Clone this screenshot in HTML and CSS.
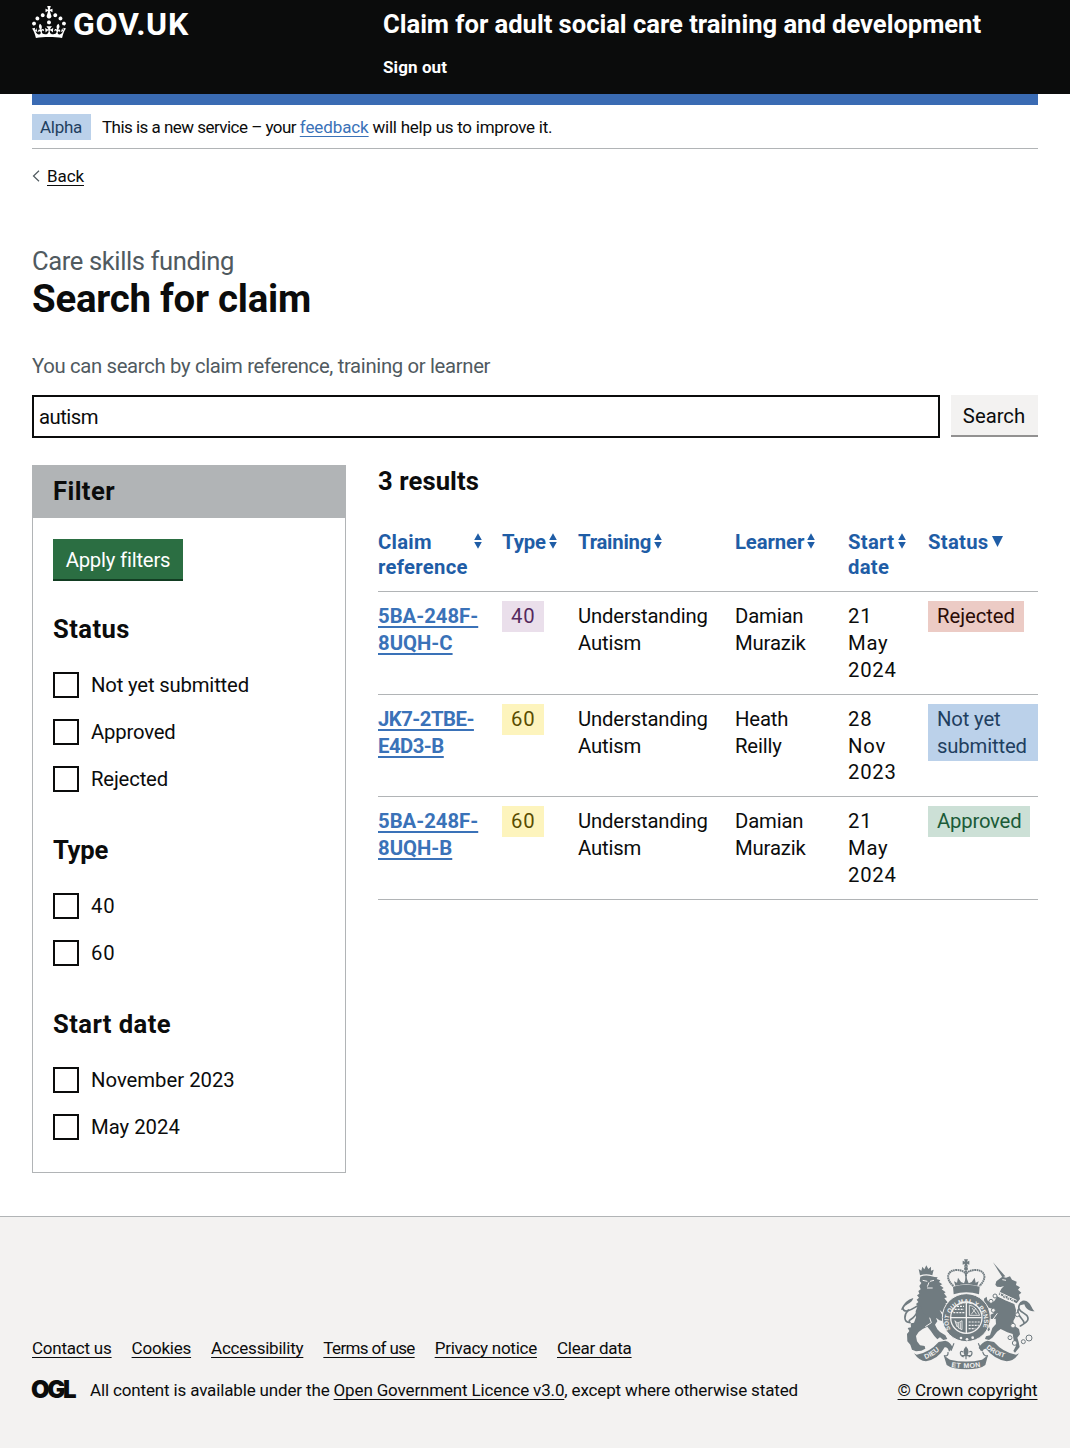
FILE: index.html
```html
<!DOCTYPE html>
<html lang="en">
<head>
<meta charset="utf-8">
<title>Search for claim – GOV.UK</title>
<link rel="stylesheet" href="styles.css">
</head>
<body>
<svg width="0" height="0" class="defs" aria-hidden="true">
  <symbol id="sort" viewBox="0 0 8 16"><path d="M4 .2 7.800 7H.2zM4 15.800 7.800 9H.2z" fill="currentColor"/></symbol>
</svg>

<header class="header">
  <div class="wrap header-row">
    <a class="logo" href="#">
      <svg class="crown" viewBox="0 0 32 30" fill="currentColor" aria-hidden="true"><path d="M22.6 10.4c-1 .4-2-.1-2.4-1-.4-.9.1-2 1-2.4.9-.4 2 .1 2.4 1s-.1 2-1 2.4m-5.900 6.700c-.9.4-2-.1-2.400-1-.4-.9.1-2 1-2.400.9-.4 2 .1 2.400 1s-.1 2-1 2.400m10.800-3.700c-1 .4-2-.1-2.400-1-.4-.9.1-2 1-2.400.9-.4 2 .1 2.400 1s0 2-1 2.400m3.300 4.800c-1 .4-2-.1-2.400-1-.4-.9.1-2 1-2.400.9-.4 2 .1 2.400 1s-.1 2-1 2.400M17 4.700l2.300 1.200V2.500l-2.300.7-.2-.2.9-3h-3.400l.9 3-.2.2c-.1.1-2.300-.7-2.300-.7v3.400L15 4.700c.1.1.1.2.2.2l-1.300 4c-.1.2-.1.4-.1.6 0 1.100.8 2 1.900 2.200h.7c1-.2 1.900-1.100 1.900-2.100 0-.2 0-.4-.1-.6l-1.300-4c-.1-.2 0-.2.1-.3m-7.600 5.700c.9.4 2-.1 2.400-1 .4-.9-.1-2-1-2.400-.9-.4-2 .1-2.400 1s0 2 1 2.400m-5 3c.9.4 2-.1 2.400-1 .4-.9-.1-2-1-2.400-.9-.4-2 .1-2.400 1s.1 2 1 2.400m-3.200 4.800c.9.4 2-.1 2.400-1 .4-.9-.1-2-1-2.400-.9-.4-2 .1-2.400 1s0 2 1 2.400m14.800 11c4.400 0 8.600.3 12.300.8 1.100-4.500 2.400-7 3.700-8.800l-2.500-.9c.2 1.300.3 1.900 0 2.700-.4-.4-.8-1.100-1.100-2.300l-1.200 4c.7-.5 1.300-.8 2-.9-1.100 2.500-2.600 3.100-3.500 3-1.100-.2-1.700-1.200-1.500-2.100.3-1.200 1.500-1.500 2.100-.1 1.100-2.300-.8-3-2-2.300 1.900-1.900 2.100-3.500.6-5.600-2.100 1.600-2.100 3.200-1.200 5.500-1.200-1.400-3.200-.6-2.500 1.600.9-1.400 2.100-.5 1.900.8-.2 1.100-1.700 2.100-3.500 1.900-2.700-.2-2.900-2.100-2.900-3.600.7-.1 1.900.5 2.900 1.900l.4-4.300c-1.100 1.100-2.100 1.400-3.200 1.400.4-1.200 2.100-3 2.100-3h-5.400s1.700 1.900 2.100 3c-1.100 0-2.100-.2-3.200-1.400l.4 4.300c1-1.400 2.200-2 2.900-1.900-.1 1.500-.2 3.400-2.900 3.600-1.900.2-3.400-.8-3.500-1.900-.2-1.300 1-2.200 1.900-.8.7-2.300-1.200-3-2.500-1.600.9-2.200.9-3.900-1.200-5.500-1.500 2-1.300 3.700.6 5.600-1.200-.7-3.100 0-2 2.300.6-1.400 1.800-1.100 2.100.1.2.9-.3 1.900-1.500 2.100-.9.2-2.400-.5-3.500-3 .6 0 1.200.3 2 .9l-1.200-4c-.3 1.100-.7 1.900-1.100 2.300-.3-.8-.2-1.400 0-2.700l-2.900.9C1.300 23 2.600 25.500 3.700 30c3.700-.5 7.900-.8 12.300-.8"/></svg>
      <span class="wordmark">GOV.UK</span>
    </a>
    <div class="header-content">
      <a class="service" href="#">Claim for adult social care training and development</a>
      <a class="signout" href="#">Sign out</a>
    </div>
  </div>
</header>

<div class="wrap">
  <div class="bluebar"></div>
  <div class="phase">
    <strong class="phase-tag">Alpha</strong>
    <span class="phase-text">This is a new service – your <a class="link" href="#">feedback</a><span class="phase-end"> will help us to improve it.</span></span>
  </div>
  <div class="back">
    <svg viewBox="0 0 8 12" aria-hidden="true"><path d="M7 .8 1.500 6 7 11.200" fill="none" stroke="#505a5f" stroke-width="1.200"/></svg>
    <a href="#">Back</a>
  </div>

  <main class="main">
    <h1 class="title"><span class="caption">Care skills funding</span>Search for claim</h1>
    <label class="hint" for="q">You can search by claim reference, training or learner</label>
    <div class="search">
      <input id="q" class="input" type="text" value="autism">
      <button class="button grey">Search</button>
    </div>

    <div class="columns">
      <aside class="filter">
        <h2 class="filter-head">Filter</h2>
        <div class="filter-body">
          <button class="button green">Apply filters</button>
          <h3 class="group">Status</h3>
          <label class="check"><input type="checkbox"><span>Not yet submitted</span></label>
          <label class="check"><input type="checkbox"><span>Approved</span></label>
          <label class="check"><input type="checkbox"><span>Rejected</span></label>
          <h3 class="group tight">Type</h3>
          <label class="check num"><input type="checkbox"><span>40</span></label>
          <label class="check num"><input type="checkbox"><span>60</span></label>
          <h3 class="group">Start date</h3>
          <label class="check date"><input type="checkbox"><span>November 2023</span></label>
          <label class="check date"><input type="checkbox"><span>May 2024</span></label>
        </div>
      </aside>

      <section class="results">
        <h2 class="count">3 results</h2>
        <table class="table">
          <colgroup><col class="c1"><col class="c2"><col class="c3"><col class="c4"><col class="c5"><col class="c6"></colgroup>
          <thead>
            <tr>
              <th><span class="sort spread wide">Claim reference<svg><use href="#sort"/></svg></span></th>
              <th><span class="sort">Type<svg><use href="#sort"/></svg></span></th>
              <th><span class="sort narrow">Training<svg><use href="#sort"/></svg></span></th>
              <th><span class="sort">Learner<svg><use href="#sort"/></svg></span></th>
              <th><span class="sort wide">Start date<svg><use href="#sort"/></svg></span></th>
              <th><span class="sort wide">Status<svg class="down" viewBox="0 0 11 11"><path d="M0 0h11L5.500 11z" fill="currentColor"/></svg></span></th>
            </tr>
          </thead>
          <tbody>
            <tr>
              <td><a class="link ref" href="#">5BA-248F-<br>8UQH-C</a></td>
              <td><span class="tag purple num">40</span></td>
              <td>Understanding Autism</td>
              <td>Damian Murazik</td>
              <td class="day">21<br>May<br>2024</td>
              <td><span class="tag red">Rejected</span></td>
            </tr>
            <tr>
              <td><a class="link ref jk" href="#">JK7-2TBE-<br>E4D3-B</a></td>
              <td><span class="tag yellow num">60</span></td>
              <td>Understanding Autism</td>
              <td>Heath<br>Reilly</td>
              <td class="day">28<br>Nov<br>2023</td>
              <td><span class="tag blue">Not yet submitted</span></td>
            </tr>
            <tr>
              <td><a class="link ref" href="#">5BA-248F-<br>8UQH-B</a></td>
              <td><span class="tag yellow num">60</span></td>
              <td>Understanding Autism</td>
              <td>Damian Murazik</td>
              <td class="day">21<br>May<br>2024</td>
              <td><span class="tag approved">Approved</span></td>
            </tr>
          </tbody>
        </table>
      </section>
    </div>
  </main>
</div>

<footer class="footer">
  <div class="wrap footer-row">
    <div class="footer-left">
      <nav class="footer-links">
        <a class="f1" href="#">Contact us</a><a class="f1" href="#">Cookies</a><a class="f1" href="#">Accessibility</a><a class="f4" href="#">Terms of use</a><a class="f5" href="#">Privacy notice</a><a class="f5" href="#">Clear data</a>
      </nav>
      <div class="licence">
        <span class="ogl">OGL</span>
        <span class="licence-text">All content is available under the <a href="#">Open Government Licence v3.0</a>, except where otherwise stated</span>
      </div>
    </div>
    <div class="footer-right">
      <svg class="arms" viewBox="30 24 405 336" aria-hidden="true">
        <defs>
          <path id="garter" d="M182 238A53 53 0 1 1 276 238"/>
          <path id="rib1" d="M102 329Q136 318 166 284"/>
          <path id="rib2" d="M180 350Q228 359 278 349"/>
          <path id="rib3" d="M284 290Q314 320 364 328"/>
        </defs>
        <g fill="#707b80">
          <!-- imperial crown -->
          <path d="M189 110Q229 98 269 110L267 133Q229 121 191 133z"/>
          <path d="M222 28h12l-3 7 7-3v12l-7-3 3 9h-12l3-9-7 3V32l7 3z"/>
          <circle cx="228" cy="56" r="6"/>
          <path d="M196 107 192 94 201 98 204 83 213 96 222 100 229 82 236 100 245 96 254 83 257 98 266 94 262 107Q229 98 196 107z"/>
          <g fill="none" stroke="#707b80" stroke-width="6" stroke-dasharray="5 1.500">
            <path d="M190 108C163 84 174 60 200 60 214 60 224 65 228 73 232 65 244 60 257 60 284 60 294 84 268 108"/>
            <path d="M228 62V92"/>
          </g>
          <!-- lion -->
          <path d="M90 76 86 57 94 62 97 50 103 58 109 46 115 57 123 50 123 62 131 59 127 76Q109 69 90 76z"/>
          <path d="M91 80Q109 72 134 81L143 82 140 87 151 91 147 96 157 103 150 106 161 114 155 118 167 127 162 130 171 142 163 145 174 158 166 160 178 172 168 173 163 181 158 188 149 180 157 196 170 206 176 218 168 222 160 214 148 211 138 203 142 214 135 224 142 238 150 246 166 256 172 267 160 270 150 262 142 268 133 258 122 242 112 230 98 237 86 246 78 258 81 274 90 286 104 288 106 296 94 302 78 304 66 299 61 284 52 274 51 252 58 243 53 234 63 232 62 220 72 218 78 202 77 184 83 168 78 162 85 156 80 149 87 143 81 136 88 131 85 123 92 118 88 108 94 99 89 93z"/>
          <path d="M83 185 91 164 101 190 114 205 104 216 83 219z"/>
          <path d="M33 179C40 161 53 148 70 144 66 160 50 161 43 171 38 178 39 181 33 179z"/>
          <!-- unicorn -->
          <path d="M309 37 346 79 337 82z"/>
          <path d="M337 80 348 83 360 79 366 89 380 95 378 105 390 112 384 119 394 128 387 134 390 147 380 160 364 152 346 146 326 133 334 116 342 108 332 111 321 110 316 104 319 94z"/>
          <path d="M323 138 344 150 373 162 378 180 376 202 370 213 373 227 387 237 390 253 382 263 386 276 389 291 375 308 370 303 378 287 371 270 368 252 352 247 332 237 321 245 307 263 297 270 285 267 288 259 300 256 307 234 318 222 317 206 301 207 295 222 300 239 295 244 286 230 284 215 288 200 311 190 306 176 291 172 283 160 282 146 290 140 292 151 303 160 313 153z"/>
          <path d="M390 166C389 150 405 147 416 158 425 166 426 178 434 184 421 184 407 179 403 163z"/>
        </g>
        <g fill="none" stroke="#707b80" stroke-width="5" stroke-linecap="round">
          <path d="M39 176C43 189 59 182 75 172 95 159 87 183 74 198 62 212 53 209 60 218"/>
          <path d="M55 180C40 196 42 216 57 217"/>
          <path d="M393 158C374 180 400 186 411 197 421 211 405 220 391 228"/>
          <path d="M385 178C377 195 401 207 402 218"/>
        </g>
        <!-- face and harness details -->
        <g fill="none" stroke="#f3f2f1" stroke-width="3">
          <path d="M98 91 112 94M120 94 132 91M117 97 112 110M111 114h17M106 230 124 218 119 203"/>
          <path d="M329 127 380 151M324 139 375 160M330 128 334 143 344 134 347 149 357 140 359 154 369 145 370 158"/>
          <path d="M337 89 348 91M306 212 322 190"/>
        </g>
        <g fill="#f3f2f1" stroke="#707b80" stroke-width="3">
          <circle cx="315" cy="138" r="6"/><circle cx="303" cy="154" r="6"/><circle cx="310" cy="181" r="6"/>
          <circle cx="382" cy="194" r="6"/><circle cx="369" cy="227" r="7"/>
          <circle cx="360" cy="263" r="6"/><circle cx="374" cy="279" r="7"/><circle cx="400" cy="275" r="6"/><circle cx="417" cy="264" r="9"/>
        </g>
        <!-- garter and shield -->
        <circle cx="229" cy="203" r="72" fill="#707b80" stroke="#f3f2f1" stroke-width="3"/>
        <circle cx="229" cy="203" r="47" fill="#707b80" stroke="#f3f2f1" stroke-width="4"/>
        <g stroke="#f3f2f1" stroke-width="4" fill="none"><path d="M229 157v92M183 203h92"/></g>
        <g stroke="#f3f2f1" stroke-width="3.500" fill="none" stroke-dasharray="6 3">
          <path d="M194 178h28M190 188h33M201 169h21M236 216h33M236 226h30M236 236h20"/>
        </g>
        <g stroke="#f3f2f1" stroke-width="2.500" fill="none">
          <path d="M238 166Q257 167 269 196H238zM246 174 260 193M258 174 244 193"/>
          <path d="M195 212Q200 224 216 212V239Q199 234 195 212M201 218v13M206 219v16M211 217v20"/>
        </g>
        <g fill="#f3f2f1"><circle cx="213" cy="264" r="4"/><circle cx="231" cy="268" r="4"/><circle cx="248" cy="263" r="4"/></g>
        <g class="motto"><text font-size="19"><textPath href="#garter" textLength="210" lengthAdjust="spacingAndGlyphs">SOIT QUI MAL Y PENSE</textPath></text></g>
        <!-- ribbon -->
        <g fill="#707b80">
          <path d="M80 314Q118 308 146 276L166 272Q184 277 187 294L177 305Q174 291 164 292 146 327 108 334 88 334 72 310z"/>
          <path d="M378 314Q340 308 312 276L292 272Q274 277 266 294L277 305Q280 295 288 296 312 327 350 334 372 334 387 310z"/>
          <path d="M161 316Q171 324 180 329 229 340 276 329L294 316 286 345Q270 358 229 358 188 358 170 345z"/>
          <path d="M228 289Q241 304 232 317H224Q215 304 228 289z"/>
        </g>
        <g fill="none" stroke="#707b80" stroke-width="3.500"><path d="M221 321C207 316 209 299 219 306M236 321C250 316 248 299 238 306M216 317h25M228 317v11M174 306C176 320 165 318 162 317M278 306C282 320 291 318 294 317M192 280 183 302M265 280 274 302"/></g>
        <g class="motto">
          <text font-size="21"><textPath href="#rib1" startOffset="5">DIEU</textPath></text>
          <text font-size="21"><textPath href="#rib2" startOffset="4" textLength="88">ET MON</textPath></text>
          <text font-size="20"><textPath href="#rib3" startOffset="6">DROIT</textPath></text>
        </g>
      </svg>
      <a class="copyright" href="#">© Crown copyright</a>
    </div>
  </div>
</footer>
</body>
</html>
```
FILE: styles.css
```css
* { box-sizing: border-box; }
body {
  margin: 0;
  background: #fff;
  color: #0b0c0c;
  font: 20.3px/26.7px Roboto, "Liberation Sans", sans-serif;
  letter-spacing: -0.15px;
}
h1, h2, h3 { margin: 0; }
a { color: inherit; text-underline-offset: 3px; text-decoration-thickness: 1px; text-decoration-skip-ink: none; }
.defs { display: block; height: 0; }
.wrap { margin: 0 32.5px 0 32px; }

/* header */
.header { height: 94px; background: #0b0c0c; color: #fff; }
.header a { text-decoration: none; font-weight: 700; }
.header-row { display: flex; }
.logo { display: flex; width: 351px; padding-top: 6px; }
.crown { width: 34px; height: 32px; margin-right: 7px; }
.wordmark { margin-top: -1px; font-size: 32px; line-height: 38px; letter-spacing: 0.7px; }
.header-content { display: flex; flex-direction: column; }
.service { padding-top: 8px; font-size: 25.6px; line-height: 32px; letter-spacing: -0.03px; white-space: nowrap; }
.signout { margin-top: 16px; font-size: 17px; line-height: 22px; letter-spacing: 0.09px; }

/* phase banner and back link */
.bluebar { height: 11px; background: #3a6bb3; }
.phase { display: flex; align-items: center; height: 44px; border-bottom: 1px solid #b1b4b6; font-size: 17px; line-height: 26px; }
.phase-tag { width: 59px; margin-right: 11px; padding: 0 8px; background: #bbd1ea; color: #1f3f60; font-weight: 400; letter-spacing: -0.28px; }
.phase-text { letter-spacing: -0.53px; }
.phase-text .link { letter-spacing: -0.1px; }
.phase-end { letter-spacing: -0.26px; }
.link { color: #3a72b8; }
.back { display: flex; align-items: center; gap: 7px; margin-top: 16px; font-size: 17px; line-height: 22px; letter-spacing: -0.1px; }
.back svg { width: 8px; height: 12px; }

/* search */
.main { padding-top: 58px; }
.title { font-size: 38.4px; line-height: 43px; letter-spacing: -0.24px; }
.caption { display: block; color: #505a5f; font-size: 25.6px; font-weight: 400; line-height: 32px; letter-spacing: -0.4px; }
.hint { display: block; margin-top: 33px; color: #505a5f; letter-spacing: -0.33px; }
.search { display: flex; gap: 11px; margin-top: 15px; height: 43px; }
.input { flex: 1; height: 43px; padding: 2px 5px 0; border: 2px solid #0b0c0c; border-radius: 0; font: inherit; letter-spacing: -0.5px; color: inherit; }
.button { height: 42px; padding: 1px 0 0; border: 0; border-radius: 0; font: inherit; letter-spacing: -0.19px; white-space: nowrap; }
.grey { width: 87px; background: #f3f2f1; box-shadow: inset 0 -2px #929191; color: #0b0c0c; letter-spacing: 0; }
.green { display: block; width: 130px; background: #2b6e42; box-shadow: inset 0 -2px #123d22; color: #fff; }

/* filter panel */
.columns { display: flex; gap: 32px; margin-top: 27px; }
.filter { width: 314px; height: 708px; border: 1px solid #b1b4b6; }
.filter-head { height: 52px; padding-left: 20px; background: #b1b4b6; font-size: 25.6px; line-height: 50px; letter-spacing: 0.42px; }
.filter-body { padding: 21px 20px 0; }
.group { margin-top: 32px; margin-bottom: 27px; font-size: 25.6px; line-height: 32px; letter-spacing: 0.43px; }
.check + .group { margin-top: 42px; }
.check + .group.tight { letter-spacing: -0.25px; }
.check { display: flex; align-items: center; height: 26px; margin-bottom: 21px; letter-spacing: -0.17px; }
.check span { padding-top: 2px; }
.check.date { letter-spacing: 0; }
.check input { appearance: none; width: 26px; height: 26px; margin: 0 12px 0 0; border: 2px solid #0b0c0c; background: #fff; }
.num { letter-spacing: 0.8px !important; }
.check + .group + .check.date, .check.date + .check.date { position: static; }

/* results table */
.results { flex: 1; }
.count { font-size: 25.6px; line-height: 32px; letter-spacing: 0.1px; }
.table { width: 659.5px; margin-top: 21px; border-collapse: collapse; table-layout: fixed; }
.c1 { width: 124px; } .c2 { width: 76px; } .c3 { width: 157px; } .c4 { width: 113px; } .c5 { width: 80px; }
th, td { padding: 0; border-bottom: 1px solid #b1b4b6; text-align: left; vertical-align: top; }
th { height: 74px; padding-top: 12px; color: #1f5da6; line-height: 25px; }
td { height: 102.6px; padding: 11px 20px 0 0; }
td:last-child { padding-right: 0; }
.sort { display: flex; align-items: flex-start; gap: 3px; letter-spacing: -0.1px; }
.sort.spread { width: 104px; justify-content: space-between; }
.sort.narrow { letter-spacing: -0.24px; }
.sort.wide { letter-spacing: 0.28px; }
.sort svg { flex: none; width: 8px; height: 16px; margin-top: 3px; }
.sort .down { width: 11px; height: 11px; margin: 6px 0 0 0; }
th:nth-child(5) .sort { width: 58px; }
.ref { font-weight: 700; letter-spacing: 0; text-decoration-thickness: 1.5px; }
.jk { letter-spacing: -0.5px; }
.jk::first-line { letter-spacing: -0.8px; }
.day { letter-spacing: 0.75px; }
.tag { display: inline-block; margin-top: -2px; padding: 2px 9px; line-height: 26.7px; letter-spacing: -0.05px; }
.tag.num { width: 42px; padding-right: 0; }
.purple { background: #eadfeb; color: #55295d; }
.yellow { background: #fdf4bd; color: #594d00; }
.red { background: #eccbc5; color: #2a0b06; }
.blue { background: #bbd1ea; color: #1f3f60; padding-right: 8px; letter-spacing: -0.15px; }
.approved { background: #cce0d6; color: #1b5b38; letter-spacing: -0.2px; }

/* footer */
.footer { height: 232px; margin-top: 43px; border-top: 1px solid #b1b4b6; background: #f3f2f1; font-size: 17px; line-height: 22px; }
.footer-row { display: flex; justify-content: space-between; padding-top: 41px; }
.footer-left { padding-top: 79px; }
.footer-links { display: flex; gap: 20px; }
.f1 { letter-spacing: -0.22px; }
.f4 { letter-spacing: -0.64px; }
.f5 { letter-spacing: -0.25px; }
.licence { display: flex; align-items: center; margin-top: 20px; }
.ogl { width: 58px; font: 900 24px/20px Inter, "Liberation Sans", sans-serif; letter-spacing: -2.4px; text-indent: -1px; }
.licence-text { letter-spacing: -0.15px; }
.footer-right { display: flex; flex-direction: column; align-items: flex-end; }
.arms { width: 135px; height: 112px; margin-right: 2.5px; }
.motto { fill: #f3f2f1; font-family: "Liberation Sans", sans-serif; font-weight: 700; letter-spacing: 0; }
.copyright { margin-top: 9px; letter-spacing: -0.05px; }
```
